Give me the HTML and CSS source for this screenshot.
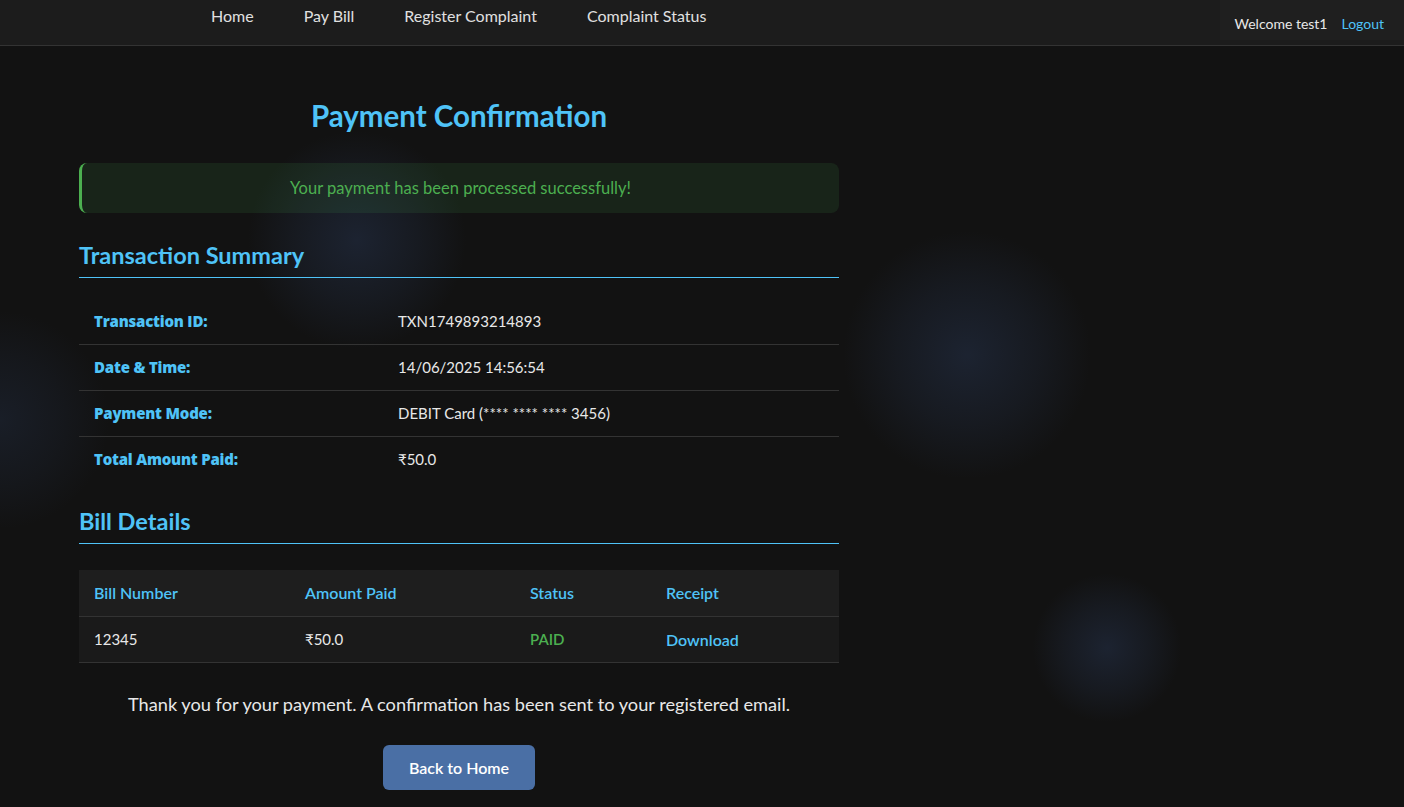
FILE: index.html
```html
<!DOCTYPE html>
<html lang="en">
<head>
<meta charset="utf-8">
<title>Payment Confirmation</title>
<link rel="stylesheet" href="styles.css">
</head>
<body>
<div class="glow glow-a"></div>
<div class="glow glow-b"></div>
<div class="glow glow-c"></div>
<div class="glow glow-d"></div>
<header class="navbar">
  <nav class="nav-links">
    <a href="#">Home</a>
    <a href="#">Pay Bill</a>
    <a href="#">Register Complaint</a>
    <a href="#">Complaint Status</a>
  </nav>
  <div class="user-box">
    <span class="welcome">Welcome test1</span>
    <a href="#" class="logout">Logout</a>
  </div>
</header>
<main class="container">
  <h1 class="title">Payment Confirmation</h1>
  <div class="success">Your payment has been processed successfully!</div>

  <h3 class="section">Transaction Summary</h3>
  <table class="summary">
    <tr><th>Transaction ID:</th><td>TXN1749893214893</td></tr>
    <tr><th>Date &amp; Time:</th><td>14/06/2025 14:56:54</td></tr>
    <tr><th>Payment Mode:</th><td>DEBIT Card (**** **** **** 3456)</td></tr>
    <tr><th>Total Amount Paid:</th><td>₹50.0</td></tr>
  </table>

  <h3 class="section section-bill">Bill Details</h3>
  <table class="bills">
    <thead>
      <tr><th class="c1">Bill Number</th><th class="c2">Amount Paid</th><th class="c3">Status</th><th class="c4">Receipt</th></tr>
    </thead>
    <tbody>
      <tr><td>12345</td><td>₹50.0</td><td class="paid">PAID</td><td><a href="#" class="dl">Download</a></td></tr>
    </tbody>
  </table>

  <p class="thanks">Thank you for your payment. A confirmation has been sent to your registered email.</p>
  <div class="actions"><a href="#" class="btn">Back to Home</a></div>
</main>
</body>
</html>
```
FILE: styles.css
```css
* { box-sizing: border-box; }
html, body { margin: 0; padding: 0; }
body {
  background: #121212;
  color: #e0e0e0;
  font-family: "Lato", "Open Sans", sans-serif;
  min-height: 807px;
  position: relative;
  overflow: hidden;
}
.glow {
  position: absolute;
  border-radius: 50%;
  pointer-events: none;
  background: radial-gradient(circle, rgba(30,38,54,0.85) 0%, rgba(30,38,54,0.4) 40%, rgba(18,18,18,0) 70%);
}
.glow-a { left: 247px; top: 130px; width: 220px; height: 220px; }
.glow-b { left: 842px; top: 230px; width: 250px; height: 250px; }
.glow-c { left: 1032px; top: 573px; width: 150px; height: 150px; }
.glow-d { left: -110px; top: 310px; width: 220px; height: 220px; opacity: 0.7; }

.navbar {
  position: relative;
  z-index: 1;
  display: flex;
  justify-content: space-between;
  align-items: flex-start;
  height: 46px;
  background: #1c1c1c;
  border-bottom: 1px solid #333;
}
.nav-links {
  display: flex;
  gap: 50px;
  padding-left: 211px;
  padding-top: 5px;
}
.nav-links a {
  color: #e0e0e0;
  text-decoration: none;
  font-size: 16px;
  line-height: 22px;
}
.user-box {
  display: flex;
  align-items: center;
  gap: 14px;
  height: 40px;
  padding: 6px 20px 0 15px;
  background: #1f1f1f;
  font-size: 14px;
}
.welcome { color: #e8e8e8; }
.logout { color: #4fc3f7; text-decoration: none; }

.container {
  position: relative;
  z-index: 1;
  width: 760px;
  margin-left: 79px;
  padding-top: 50px;
}
.title {
  margin: 0 0 27px;
  text-align: center;
  color: #4fc3f7;
  font-size: 29.5px;
  font-weight: 700;
  line-height: 40px;
}
.success {
  height: 50px;
  display: flex;
  align-items: center;
  justify-content: center;
  background: rgba(76, 175, 80, 0.12);
  border-left: 3px solid #4caf50;
  border-radius: 8px;
  color: #4caf50;
  font-size: 16.5px;
}
.section {
  margin: 27px 0 20px;
  padding-bottom: 7px;
  color: #4fc3f7;
  font-size: 23.5px;
  font-weight: 700;
  line-height: 30px;
  border-bottom: 1px solid #4fc3f7;
}
.section-bill { margin-top: 24px; }
.summary {
  width: 100%;
  border-collapse: collapse;
}
.summary th, .summary td {
  height: 46px;
  padding: 0 15px;
  text-align: left;
  font-size: 15px;
  border-bottom: 1px solid #333;
}
.summary tr:last-child th, .summary tr:last-child td { border-bottom: none; }
.summary th {
  width: 40%;
  color: #4fc3f7;
  font-family: "Open Sans", "Lato", sans-serif;
  font-weight: 800;
  letter-spacing: -0.2px;
}
.summary td { color: #e8e8e8; }

.bills {
  width: 100%;
  border-collapse: collapse;
  background: #1a1a1a;
  margin-top: 26px;
}
.bills th, .bills td {
  height: 46px;
  padding: 0 15px;
  text-align: left;
  font-size: 15px;
  border-bottom: 1px solid #333;
}
.bills th { background: #1e1e1e; color: #4fc3f7; font-weight: 600; font-size: 16px; }
.bills td { color: #e8e8e8; }
.c1 { width: 211px; }
.c2 { width: 225px; }
.c3 { width: 136px; }
.paid { color: #4caf50 !important; font-weight: 600; }
.dl { color: #4fc3f7; text-decoration: none; font-weight: 600; font-size: 16px; }

.thanks {
  margin: 29px 0 29px;
  text-align: center;
  font-size: 18.2px;
  line-height: 24px;
  color: #e8e8e8;
}
.actions { display: flex; justify-content: center; }
.btn {
  display: flex;
  align-items: center;
  justify-content: center;
  width: 152px;
  height: 45px;
  background: #4a6fa5;
  color: #fff;
  border-radius: 6px;
  text-decoration: none;
  font-size: 16px;
  font-weight: 600;
}
```
